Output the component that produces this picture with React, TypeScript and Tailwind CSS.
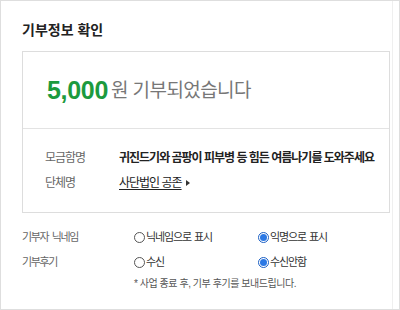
import React from "react";

function Radio({ checked, label }: { checked?: boolean; label: string }) {
  return (
    <div className="flex items-center">
      {checked ? (
        <span className="w-[11px] h-[11px] rounded-full border border-[#1b5fc4] bg-white flex items-center justify-center">
          <span className="w-[7px] h-[7px] rounded-full bg-[#2b78e4]" />
        </span>
      ) : (
        <span className="w-[11px] h-[11px] rounded-full border border-[#555] bg-white" />
      )}
      <span className="ml-[1px] text-[11px] text-[#333] tracking-[-1.1px] [word-spacing:1px]">{label}</span>
    </div>
  );
}

export default function App() {
  return (
    <div
      className="w-[400px] h-[310px] bg-white border border-[#dedede] overflow-hidden"
      style={{ fontFamily: '"Liberation Sans", "Noto Sans CJK KR", sans-serif' }}
    >
      <div className="h-full w-[392px] border-r border-[#efefef] pl-[21px] pt-[19px]">
        <h1 className="text-[14px] leading-[20px] font-bold text-[#222]">기부정보 확인</h1>

        <div className="mt-[11px] w-[368px] border border-[#dddddd]">
          <div className="h-[76px] flex items-center pl-[24px] pt-[2px]">
            <span className="text-[25px] font-bold text-[#1c9a3e] tracking-[-0.3px]">5,000</span>
            <span className="text-[19px] text-[#777] ml-[3px] tracking-[-0.6px]">원 기부되었습니다</span>
          </div>
          <div className="border-t border-[#e3e3e3] pt-[16px] pb-[17px] pl-[22px]">
            <div className="flex items-center h-[25px]">
              <span className="w-[74px] text-[12px] text-[#666] tracking-[-1px]">모금함명</span>
              <span className="text-[12px] font-bold text-[#222] tracking-[-1px]">
                귀진드기와 곰팡이 피부병 등 힘든 여름나기를 도와주세요
              </span>
            </div>
            <div className="flex items-center h-[25px]">
              <span className="w-[74px] text-[12px] text-[#666] tracking-[-1px]">단체명</span>
              <span className="text-[12px] text-[#222] underline underline-offset-2 tracking-[-1px]">
                사단법인 공존
              </span>
              <span className="ml-[4px] w-0 h-0 border-y-[3px] border-y-transparent border-l-[4px] border-l-[#333]" />
            </div>
          </div>
        </div>

        <div className="mt-[12px]">
          <div className="flex items-center h-[25px]">
            <span className="w-[112px] text-[11px] text-[#666] tracking-[-1.4px] [word-spacing:2px]">기부자 닉네임</span>
            <div className="w-[124px]">
              <Radio label="닉네임으로 표시" />
            </div>
            <Radio checked label="익명으로 표시" />
          </div>
          <div className="flex items-center h-[25px]">
            <span className="w-[112px] text-[11px] text-[#666] tracking-[-1.4px]">기부후기</span>
            <div className="w-[124px]">
              <Radio label="수신" />
            </div>
            <Radio checked label="수신안함" />
          </div>
          <div className="pl-[112px] h-[16px] flex items-center text-[10px] text-[#555] tracking-[-0.45px]">
            * 사업 종료 후, 기부 후기를 보내드립니다.
          </div>
        </div>
      </div>
    </div>
  );
}
